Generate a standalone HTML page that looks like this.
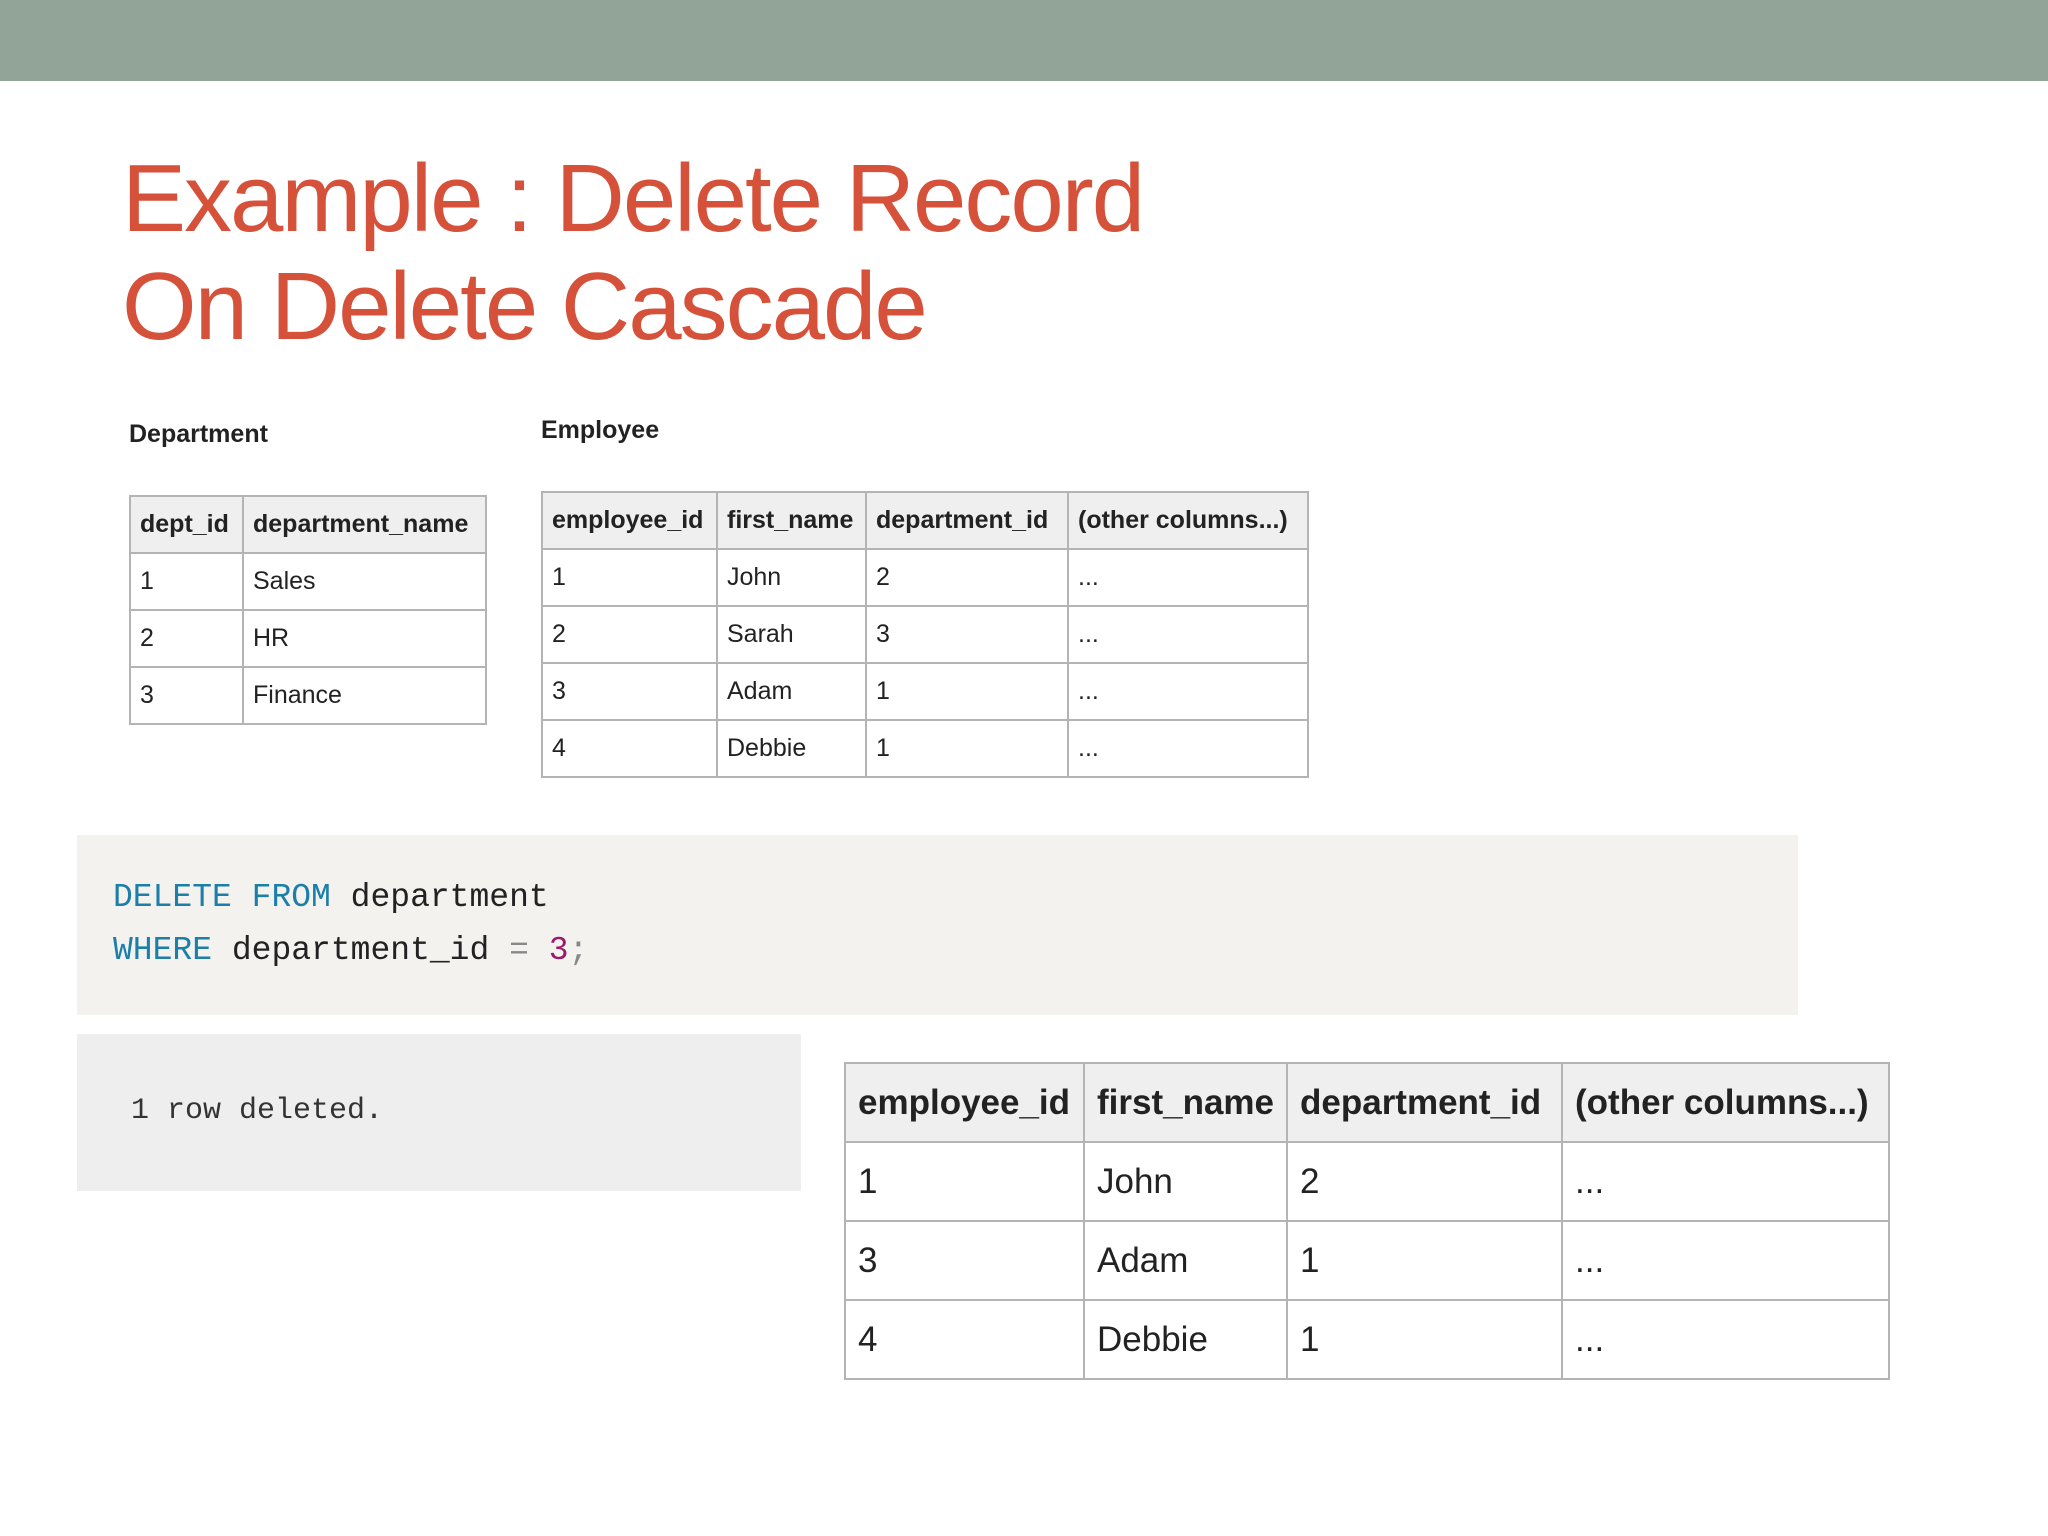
<!DOCTYPE html>
<html><head><meta charset="utf-8"><style>
body{margin:0;width:2048px;height:1536px;background:#fff;position:relative;overflow:hidden;font-family:"Liberation Sans",sans-serif;}
.bar{position:absolute;left:0;top:0;width:2048px;height:81px;background:#92a397;}
h1{position:absolute;left:122px;top:145px;margin:0;font-weight:normal;color:#d5513a;font-size:96px;line-height:108px;letter-spacing:-2px;}
.lbl{position:absolute;font-weight:bold;font-size:25px;color:#222;}
table{position:absolute;border-collapse:collapse;table-layout:fixed;color:#222;}
td,th{border:2px solid #b4b4b4;padding:0 9px;text-align:left;white-space:nowrap;overflow:hidden;}
th{background:#efefef;font-weight:bold;}
.s td,.s th{height:55px;font-size:25px;}
.b td,.b th{height:77px;font-size:35px;padding:0 12px;}
.code{position:absolute;left:77px;top:835px;width:1721px;height:180px;background:#f4f2ef;font-family:"Liberation Mono",monospace;font-size:33px;color:#222;}
.code div{position:absolute;left:36px;}
.k{color:#1c7fa8}.n{color:#9b1b6b}.p{color:#888}
.out{position:absolute;left:77px;top:1034px;width:724px;height:157px;background:#eeeeee;font-family:"Liberation Mono",monospace;font-size:30px;color:#333;}
</style></head><body>
<div class="bar"></div>
<h1>Example : Delete Record<br>On Delete Cascade</h1>
<div class="lbl" style="left:129px;top:420px">Department</div>
<div class="lbl" style="left:541px;top:416px">Employee</div>
<table class="s" style="left:129px;top:495px;width:358px">
<colgroup><col style="width:113px"><col></colgroup>
<tr><th>dept_id</th><th>department_name</th></tr>
<tr><td>1</td><td>Sales</td></tr>
<tr><td>2</td><td>HR</td></tr>
<tr><td>3</td><td>Finance</td></tr>
</table>
<table class="s" style="left:541px;top:491px;width:768px">
<colgroup><col style="width:175px"><col style="width:149px"><col style="width:202px"><col></colgroup>
<tr><th>employee_id</th><th>first_name</th><th>department_id</th><th>(other columns...)</th></tr>
<tr><td>1</td><td>John</td><td>2</td><td>...</td></tr>
<tr><td>2</td><td>Sarah</td><td>3</td><td>...</td></tr>
<tr><td>3</td><td>Adam</td><td>1</td><td>...</td></tr>
<tr><td>4</td><td>Debbie</td><td>1</td><td>...</td></tr>
</table>
<div class="code">
<div style="top:44px"><span class="k">DELETE</span> <span class="k">FROM</span> department</div>
<div style="top:97px"><span class="k">WHERE</span> department_id <span class="p">=</span> <span class="n">3</span><span class="p">;</span></div>
</div>
<div class="out"><div style="position:absolute;left:54px;top:60px">1 row deleted.</div></div>
<table class="b" style="left:844px;top:1062px;width:1046px">
<colgroup><col style="width:239px"><col style="width:203px"><col style="width:275px"><col></colgroup>
<tr><th>employee_id</th><th>first_name</th><th>department_id</th><th>(other columns...)</th></tr>
<tr><td>1</td><td>John</td><td>2</td><td>...</td></tr>
<tr><td>3</td><td>Adam</td><td>1</td><td>...</td></tr>
<tr><td>4</td><td>Debbie</td><td>1</td><td>...</td></tr>
</table>
</body></html>
